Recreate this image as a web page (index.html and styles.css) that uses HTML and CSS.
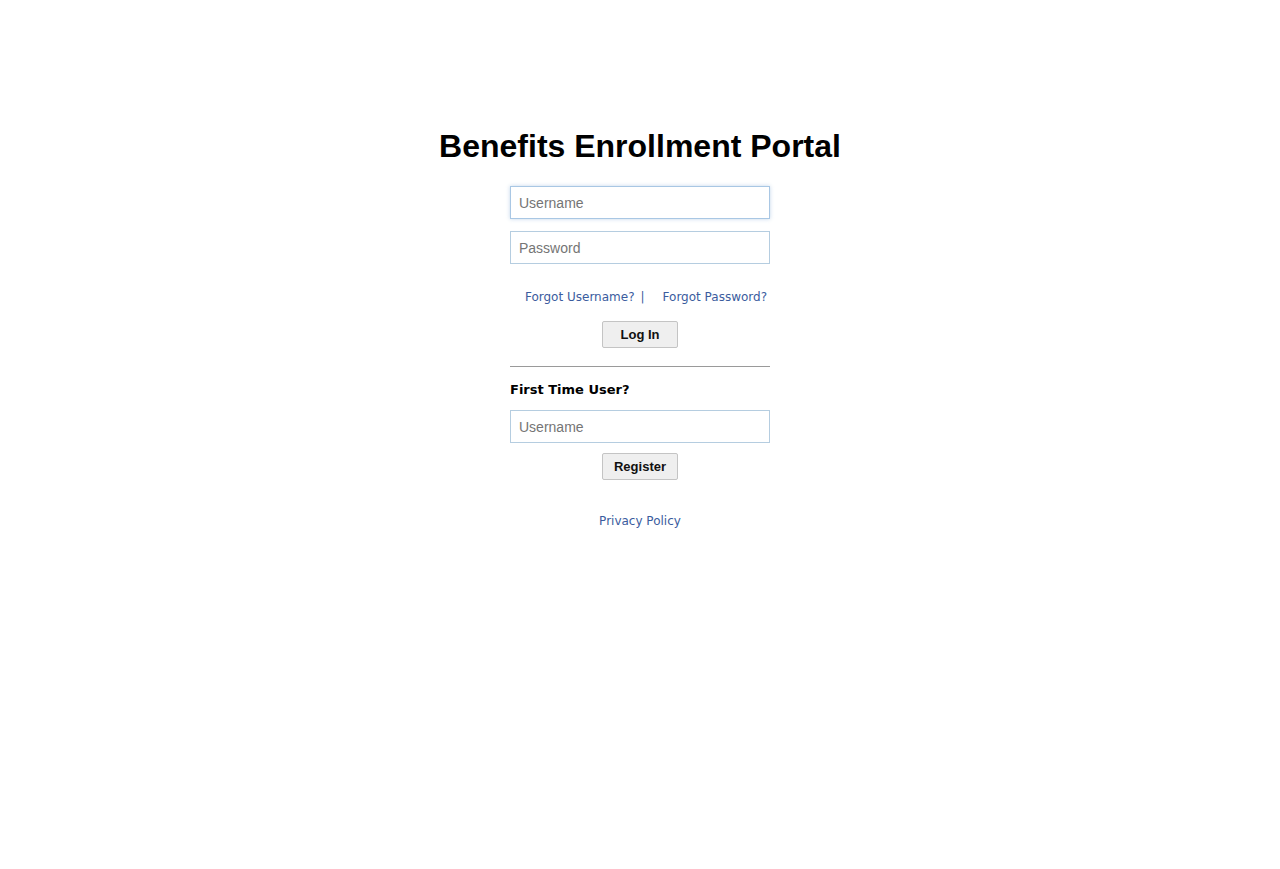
FILE: index.html
```html
<!DOCTYPE html>
<html>
<head>
<meta charset="utf-8">
<title>Benefits Enrollment Portal</title>
<link rel="stylesheet" href="styles.css">
</head>
<body>
<main class="page">
  <h1 class="title">Benefits Enrollment Portal</h1>
  <form class="panel">
    <input class="field field-focus" type="text" placeholder="Username">
    <input class="field field-gap" type="password" placeholder="Password">
    <div class="links">
      <a class="link" href="#">Forgot Username?</a>
      <span class="sep">|</span>
      <a class="link" href="#">Forgot Password?</a>
    </div>
    <div class="actions"><button class="btn" type="button">Log In</button></div>
    <hr class="rule">
    <div class="subhead">First Time User?</div>
    <input class="field" type="text" placeholder="Username">
    <div class="actions actions-reg"><button class="btn" type="button">Register</button></div>
    <div class="footer"><a class="link" href="#">Privacy Policy</a></div>
  </form>
</main>
</body>
</html>
```

FILE: styles.css
```css
html, body {
  margin: 0;
  padding: 0;
  background: #ffffff;
}
.page {
  display: flex;
  flex-direction: column;
  align-items: center;
  padding-top: 128px;
  font-family: "Liberation Sans", Arial, sans-serif;
}
.title {
  margin: 0;
  font-size: 32px;
  line-height: 36px;
  font-weight: bold;
  color: #000;
}
.panel {
  width: 260px;
  margin-top: 22px;
  display: flex;
  flex-direction: column;
}
.field {
  box-sizing: border-box;
  width: 260px;
  height: 33px;
  margin: 0;
  padding: 0 8px;
  border: 1px solid #b5cde0;
  border-radius: 0;
  font-family: "Liberation Sans", Arial, sans-serif;
  font-size: 14px;
  color: #333;
  background: #fff;
  outline: none;
}
.field::placeholder {
  color: #757575;
}
.field-focus {
  border-color: #a9c7e4;
  box-shadow: 0 0 4px rgba(120, 165, 210, 0.45);
}
.field-gap {
  margin-top: 12px;
}
.links {
  margin-top: 24px;
  display: flex;
  justify-content: flex-end;
  padding-right: 3px;
  font-family: "DejaVu Sans", Verdana, sans-serif;
  font-size: 12px;
  line-height: 18px;
}
.link {
  color: #3b5c9e;
  text-decoration: none;
  font-family: "DejaVu Sans", Verdana, sans-serif;
  font-size: 12px;
}
.sep {
  color: #3b5c9e;
  margin: 0 18px 0 6px;
}
.actions {
  margin-top: 15px;
  display: flex;
  justify-content: center;
}
.actions-reg {
  margin-top: 10px;
}
.btn {
  box-sizing: border-box;
  width: 76px;
  height: 27px;
  padding: 0;
  background: #efefef;
  border: 1px solid #c4c4c4;
  border-radius: 2px;
  font-family: "Liberation Sans", Arial, sans-serif;
  font-size: 13px;
  font-weight: bold;
  color: #111;
}
.rule {
  margin: 18px 0 0 0;
  border: 0;
  border-top: 1px solid #9a9a9a;
  height: 0;
}
.subhead {
  margin-top: 15px;
  margin-bottom: 12px;
  font-family: "DejaVu Sans", Verdana, sans-serif;
  font-size: 13px;
  line-height: 16px;
  font-weight: bold;
  color: #000;
}
.footer {
  margin-top: 32px;
  text-align: center;
  line-height: 16px;
}
```
